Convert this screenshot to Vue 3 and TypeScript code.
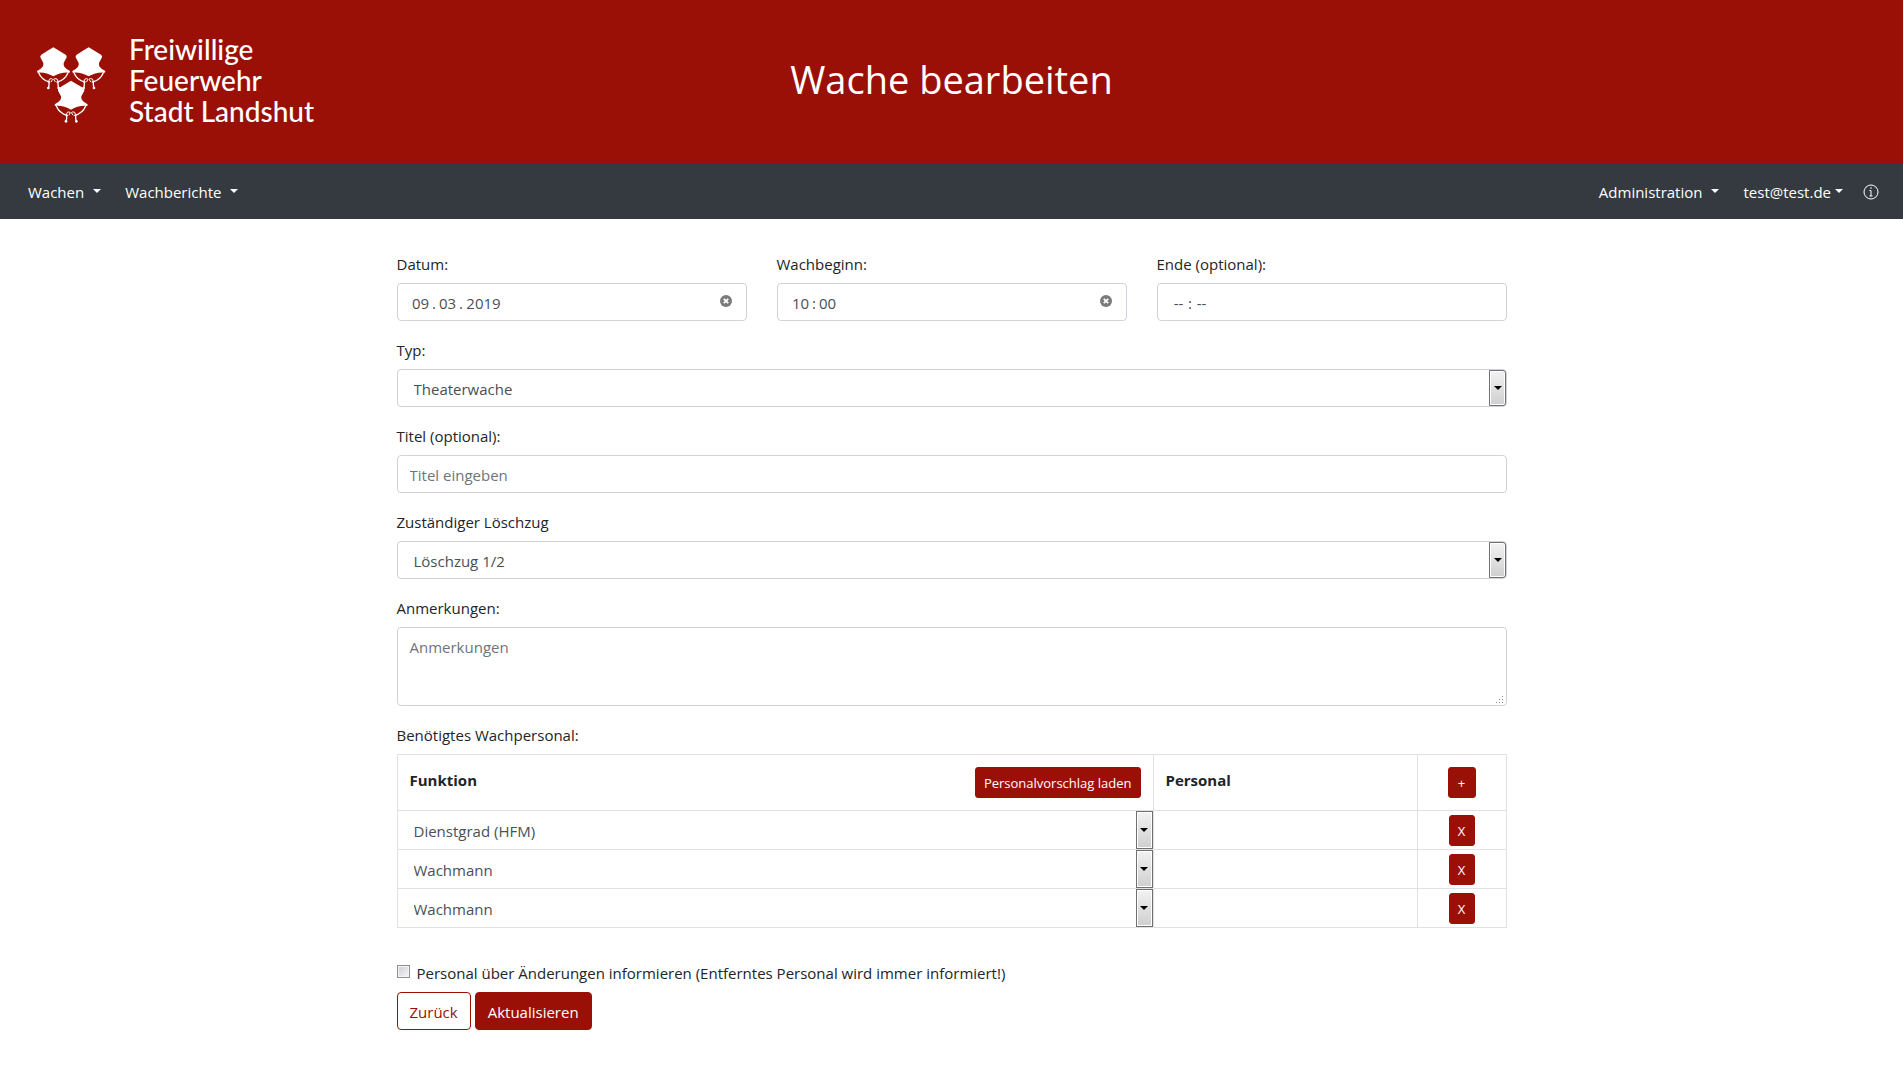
<script setup lang="ts">
import { ref } from 'vue'

interface Position {
  id: number
  role: string
}

const roles: string[] = ['Dienstgrad (HFM)', 'Wachmann']
const types: string[] = ['Theaterwache', 'Sicherheitswache']
const units: string[] = ['Löschzug 1/2', 'Löschzug 3']

const dateParts = ref<string[]>(['09', '03', '2019'])
const startParts = ref<string[]>(['10', '00'])
const endParts = ref<string[]>(['--', '--'])
const type = ref('Theaterwache')
const title = ref('')
const unit = ref('Löschzug 1/2')
const notes = ref('')
const notify = ref(false)

const positions = ref<Position[]>([
  { id: 1, role: 'Dienstgrad (HFM)' },
  { id: 2, role: 'Wachmann' },
  { id: 3, role: 'Wachmann' },
])

let nextId = 4

function addPosition(): void {
  positions.value.push({ id: nextId++, role: 'Wachmann' })
}

function removePosition(id: number): void {
  positions.value = positions.value.filter((p) => p.id !== id)
}
</script>

<template>
  <header class="banner">
    <a class="brand" href="#">
      <svg class="crest" viewBox="0 0 207 228" aria-hidden="true">
        <defs>
          <g id="helmet">
            <path
              fill="#fff"
              d="M49 1 L64 10 L86 23 Q90 26 89 31 L80 48 Q79 54 82 59 Q87 66 99 72 L98 77 C80 75 64 80 49 88 C34 80 18 75 1 77 L0 72 Q12 66 17 59 Q20 54 19 48 L10 31 Q9 26 13 23 L34 10Z"
            />
            <g fill="none" stroke="#fff" stroke-width="4" stroke-linecap="round">
              <path d="M5 77 C10 90 22 101 38 105" />
              <path d="M93 77 C88 90 76 101 60 105" />
              <path d="M34 105 L38 96 Q43 93 47 97 L43 104 M64 105 L60 96 Q53 93 50 97 L55 104" stroke-width="3" />
              <path d="M36 106 L36 114 L34 124" />
              <path d="M63 106 L63 114 L65 124" />
            </g>
            <circle cx="34" cy="123" r="4" fill="#fff" />
            <circle cx="65" cy="123" r="4" fill="#fff" />
          </g>
        </defs>
        <use href="#helmet" />
        <use href="#helmet" x="106" />
        <use href="#helmet" x="53" y="100" />
      </svg>
      <span class="brand-text">Freiwillige<br />Feuerwehr<br />Stadt Landshut</span>
    </a>
    <h1>Wache bearbeiten</h1>
  </header>

  <nav class="navbar">
    <div class="nav-group">
      <a class="nav-link caret spaced" href="#">Wachen</a>
      <a class="nav-link caret spaced" href="#">Wachberichte</a>
    </div>
    <div class="nav-group">
      <a class="nav-link caret spaced" href="#">Administration</a>
      <div class="account">
        <a class="nav-link caret" href="#">test@test.de</a>
        <a class="nav-link" href="#" aria-label="Info">
          <svg class="info" viewBox="0 0 16 16" aria-hidden="true">
            <circle cx="8" cy="8" r="7" fill="none" stroke="#fff" />
            <path d="M8 6.500V12M6.500 6.500H8M6.500 12H9.500" fill="none" stroke="#fff" />
            <circle cx="8" cy="4" r="0.800" fill="#fff" />
          </svg>
        </a>
      </div>
    </div>
  </nav>

  <main class="container">
    <form @submit.prevent>
      <div class="row">
        <div class="form-group">
          <label for="date-0">Datum:</label>
          <div class="form-control segments">
            <template v-for="(_, i) in dateParts" :key="i">
              <span v-if="i > 0" class="separator">.</span>
              <input :id="`date-${i}`" v-model="dateParts[i]" type="text" :class="{ year: i === 2 }" />
            </template>
            <button type="button" class="clear" aria-label="Datum löschen">
              <svg viewBox="0 0 12 12"><circle cx="6" cy="6" r="6" fill="#7b7b7b" /><path d="M3.800 3.800L8.200 8.200M8.200 3.800L3.800 8.200" stroke="#fff" stroke-width="1.800" /></svg>
            </button>
          </div>
        </div>
        <div class="form-group">
          <label for="start-0">Wachbeginn:</label>
          <div class="form-control segments">
            <template v-for="(_, i) in startParts" :key="i">
              <span v-if="i > 0" class="separator">:</span>
              <input :id="`start-${i}`" v-model="startParts[i]" type="text" />
            </template>
            <button type="button" class="clear" aria-label="Beginn löschen">
              <svg viewBox="0 0 12 12"><circle cx="6" cy="6" r="6" fill="#7b7b7b" /><path d="M3.800 3.800L8.200 8.200M8.200 3.800L3.800 8.200" stroke="#fff" stroke-width="1.800" /></svg>
            </button>
          </div>
        </div>
        <div class="form-group">
          <label for="end-0">Ende (optional):</label>
          <div class="form-control segments empty">
            <template v-for="(_, i) in endParts" :key="i">
              <span v-if="i > 0" class="separator">:</span>
              <input :id="`end-${i}`" v-model="endParts[i]" type="text" />
            </template>
          </div>
        </div>
      </div>

      <div class="form-group">
        <label for="type">Typ:</label>
        <div class="select-box">
          <select id="type" v-model="type" class="form-control">
            <option v-for="t in types" :key="t">{{ t }}</option>
          </select>
        </div>
      </div>

      <div class="form-group">
        <label for="title">Titel (optional):</label>
        <input id="title" v-model="title" class="form-control" type="text" placeholder="Titel eingeben" />
      </div>

      <div class="form-group">
        <label for="unit">Zuständiger Löschzug</label>
        <div class="select-box">
          <select id="unit" v-model="unit" class="form-control">
            <option v-for="u in units" :key="u">{{ u }}</option>
          </select>
        </div>
      </div>

      <div class="form-group">
        <label for="notes">Anmerkungen:</label>
        <div class="notes-box">
          <textarea id="notes" v-model="notes" class="form-control" placeholder="Anmerkungen"></textarea>
          <svg class="grip" viewBox="0 0 8 8" aria-hidden="true">
            <path d="M6 0h1v1H6zM3 3h1v1H3zM6 3h1v1H6zM0 6h1v1H0zM3 6h1v1H3zM6 6h1v1H6z" fill="#8a8a8a" />
          </svg>
        </div>
      </div>

      <label id="staff-label">Benötigtes Wachpersonal:</label>
      <table aria-labelledby="staff-label">
        <thead>
          <tr>
            <th class="col-role">
              <div class="role-head">
                Funktion
                <button type="button" class="btn btn-sm">Personalvorschlag laden</button>
              </div>
            </th>
            <th class="col-staff">Personal</th>
            <th class="col-action">
              <button type="button" class="btn btn-sm add" @click="addPosition">+</button>
            </th>
          </tr>
        </thead>
        <tbody>
          <tr v-for="p in positions" :key="p.id">
            <td>
              <div class="select-box">
                <select v-model="p.role" class="form-control" aria-label="Funktion">
                  <option v-for="r in roles" :key="r">{{ r }}</option>
                </select>
              </div>
            </td>
            <td></td>
            <td class="col-action">
              <button type="button" class="btn btn-sm remove" @click="removePosition(p.id)">X</button>
            </td>
          </tr>
        </tbody>
      </table>

      <div class="notify">
        <input id="notify" v-model="notify" type="checkbox" />
        <label for="notify">Personal über Änderungen informieren (Entferntes Personal wird immer informiert!)</label>
      </div>

      <div class="actions">
        <button type="button" class="btn btn-outline">Zurück</button>
        <button type="submit" class="btn">Aktualisieren</button>
      </div>
    </form>
  </main>
</template>

<style>
body {
  margin: 0;
  background: #fff;
  color: #212529;
  font: 15px/24px 'Open Sans', 'Noto Sans', sans-serif;
}
</style>

<style scoped>
*,
*::before,
*::after {
  box-sizing: border-box;
}

.banner {
  display: grid;
  grid-template-columns: 1fr auto 1fr;
  align-items: center;
  min-height: 163px;
  padding: 0 37px 2px;
  background: #9b1006;
  color: #fff;
}

.brand {
  display: flex;
  align-items: flex-end;
  gap: 23px;
  color: #fff;
  text-decoration: none;
}

.crest {
  width: 69px;
  height: 76px;
  margin-bottom: 4px;
}

.brand-text {
  font-family: Lato, 'Open Sans', sans-serif;
  font-size: 28px;
  line-height: 31px;
  font-weight: 500;
}

h1 {
  margin: 0;
  padding-bottom: 4px;
  font-size: 38px;
  line-height: 48px;
  font-weight: 400;
}

.navbar {
  display: flex;
  justify-content: space-between;
  align-items: center;
  min-height: 56px;
  padding: 2px 24px 0 28px;
  background: #343a40;
}

.nav-group {
  display: flex;
  align-items: center;
  gap: 24px;
}

.account {
  display: flex;
  align-items: center;
  gap: 20px;
}

.nav-link {
  display: flex;
  align-items: center;
  color: #fff;
  text-decoration: none;
}

.nav-link.caret {
  gap: 4px;
}

.nav-link.spaced {
  gap: 9px;
}

.caret::after {
  content: '';
  margin-bottom: 2px;
  border: 4px solid transparent;
  border-top-color: #fff;
  border-bottom: 0;
}

.info {
  width: 16px;
  height: 16px;
}

.container {
  max-width: 1140px;
  margin: 0 auto;
  padding: 32px 15px;
}

.row {
  display: grid;
  grid-template-columns: repeat(3, 1fr);
  gap: 30px;
}

label {
  display: block;
  margin-bottom: 6px;
  line-height: 26px;
}

.form-group {
  margin-bottom: 16px;
}

.form-control {
  display: block;
  width: 100%;
  height: 38px;
  padding: 7px 12px 5px;
  border: 1px solid #ced4da;
  border-radius: 4px;
  background: #fff;
  color: #495057;
  font: inherit;
}

.form-control::placeholder {
  color: #6c757d;
  opacity: 1;
}

.segments {
  display: flex;
  align-items: center;
  padding: 7px 14px 5px;
}

.segments input {
  width: 18px;
  height: 24px;
  padding: 0;
  border: 0;
  background: none;
  color: inherit;
  font: inherit;
  text-align: center;
}

.segments .year {
  width: 36px;
}

.segments.empty input {
  width: 14px;
}

.separator {
  width: 9px;
  text-align: center;
}

.clear {
  display: flex;
  margin-left: auto;
  padding: 0 0 4px;
  border: 0;
  background: none;
}

.clear svg {
  width: 12px;
  height: 12px;
}

.select-box,
.notes-box {
  position: relative;
}

.select-box select {
  padding: 7px 16px 5px;
  appearance: none;
}

.select-box::before {
  content: '';
  position: absolute;
  top: 1px;
  right: 1px;
  bottom: 1px;
  width: 17px;
  border: 1px solid #707070;
  border-radius: 0 3px 3px 0;
  background: linear-gradient(#f2f2f2, #cfcfcf);
  box-shadow: inset 0 0 0 1px #fff;
  pointer-events: none;
}

.select-box::after {
  content: '';
  position: absolute;
  top: 17px;
  right: 5px;
  border: 4px solid transparent;
  border-top-color: #000;
  border-bottom: 0;
  pointer-events: none;
}

textarea.form-control {
  height: 79px;
  resize: none;
}

.grip {
  position: absolute;
  right: 3px;
  bottom: 2px;
  width: 8px;
  height: 8px;
}

table {
  width: 100%;
  border-collapse: collapse;
  table-layout: fixed;
}

th,
td {
  border: 1px solid #dee2e6;
  text-align: left;
  vertical-align: top;
}

th {
  padding: 12px;
  line-height: 26px;
}

td {
  padding: 0;
}

td .form-control {
  border: 0;
}

td .select-box::before {
  top: 0;
  right: 0;
  bottom: 0;
  border-radius: 0;
}

.col-staff {
  width: 264px;
}

.col-action {
  width: 89px;
  text-align: center;
}

td.col-action {
  vertical-align: middle;
}

.role-head {
  display: flex;
  justify-content: space-between;
}

.btn {
  height: 38px;
  padding: 7px 12px 5px;
  border: 1px solid #9b1006;
  border-radius: 4px;
  background: #9b1006;
  color: #fff;
  font: inherit;
  font-weight: 400;
}

.btn-sm {
  display: inline-block;
  height: 31px;
  padding: 5px 8px 3px;
  border-radius: 3px;
  font-size: 13px;
  line-height: 21px;
  vertical-align: top;
}

.btn-sm.add {
  width: 28px;
}

.btn-sm.remove {
  width: 26px;
}

.btn-outline {
  background: #fff;
  color: #9b1006;
}

.notify {
  display: flex;
  align-items: center;
  gap: 7px;
  margin-top: 32px;
}

.notify label {
  margin: 0;
}

.notify input {
  width: 13px;
  height: 13px;
  margin: 0 0 4px;
  border: 1px solid #8e8f8f;
  background: linear-gradient(135deg, #cbcfd5, #f6f6f6);
  box-shadow: inset 0 0 0 1px #f4f4f4;
  appearance: none;
}

.notify input:checked {
  background: #9b1006;
}

.actions {
  display: flex;
  gap: 4px;
  margin-top: 6px;
}
</style>
